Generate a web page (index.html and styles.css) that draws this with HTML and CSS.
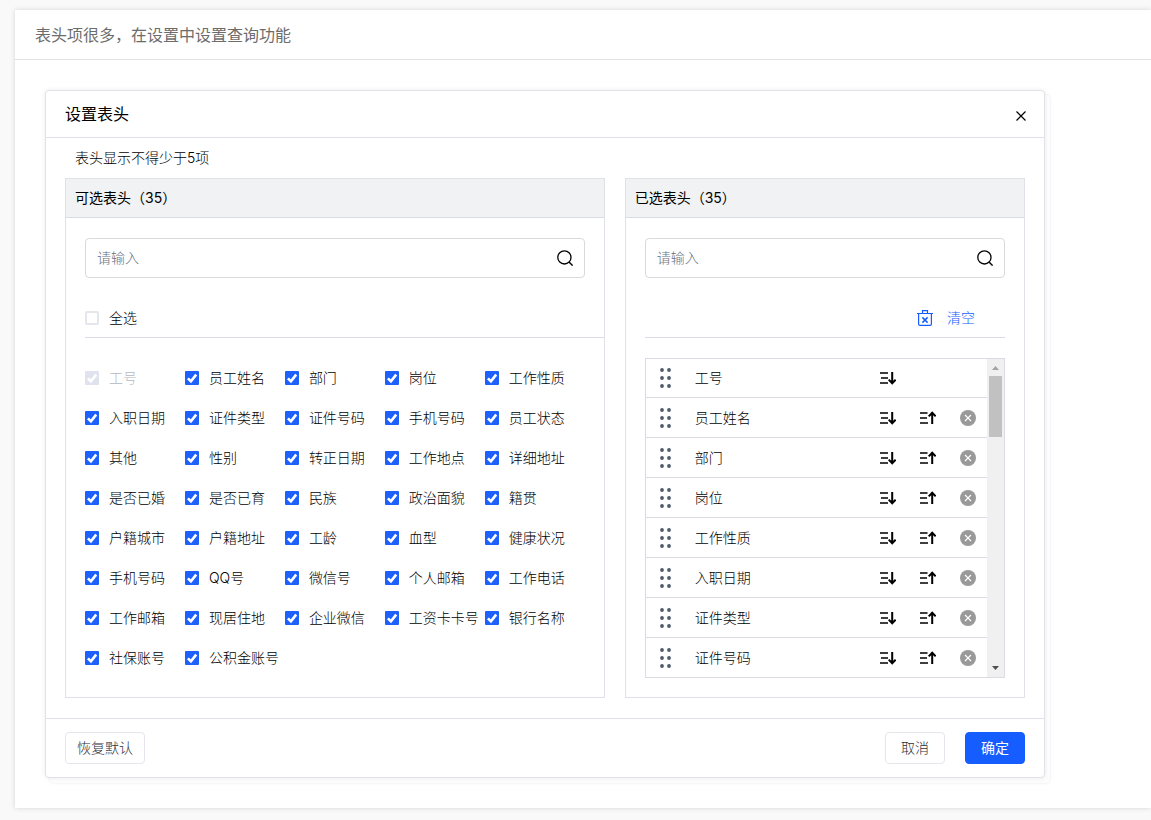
FILE: index.html
```html
<!DOCTYPE html>
<html lang="zh-CN">
<head>
<meta charset="utf-8">
<meta name="viewport" content="width=device-width, initial-scale=1">
<title>设置表头</title>
<link rel="stylesheet" href="styles.css">
</head>
<body>
<svg class="sprite" aria-hidden="true">
  <symbol id="search" viewBox="0 0 16 16"><circle cx="7.4" cy="7.4" r="6.6" fill="none" stroke="currentColor" stroke-width="1.3"/><path d="M12 12l3.6 3.6" fill="none" stroke="currentColor" stroke-width="1.4"/></symbol>
  <symbol id="trash" viewBox="0 0 16 16"><path d="M0 3.500h16M5.500 3.400V.7h5v2.700M1.600 3.500v10.500q0 1.300 1.300 1.300h10.200q1.300 0 1.300-1.300V3.500" fill="none" stroke="currentColor" stroke-width="1.200"/><path d="M5.400 7.400l5.200 5.200m0-5.200l-5.200 5.200" fill="none" stroke="currentColor" stroke-width="1.500"/></symbol>
  <symbol id="down" viewBox="0 0 16 16"><path d="M0 3h8M1 8h7M0 13h8" fill="none" stroke="currentColor" stroke-width="1.7"/><path d="M12.200 2v11.400M8.700 9.600l3.500 3.600 3.500-3.600" fill="none" stroke="currentColor" stroke-width="2"/></symbol>
  <symbol id="up" viewBox="0 0 16 16"><path d="M0 3h7.500M0 8h7M0 13h8" fill="none" stroke="currentColor" stroke-width="1.7"/><path d="M12.200 14V2.800M8.700 6.400l3.500-3.600 3.500 3.600" fill="none" stroke="currentColor" stroke-width="2"/></symbol>
  <symbol id="remove" viewBox="0 0 16 16"><circle cx="8" cy="8" r="8" fill="#999"/><path d="M5 5l6 6m0-6l-6 6" fill="none" stroke="#fff" stroke-width="1.1"/></symbol>
  <symbol id="grip" viewBox="0 0 12 20"><g fill="#4e5969"><circle cx="2" cy="2" r="1.900"/><circle cx="9" cy="2" r="1.900"/><circle cx="2" cy="10" r="1.900"/><circle cx="9" cy="10" r="1.900"/><circle cx="2" cy="18" r="1.900"/><circle cx="9" cy="18" r="1.900"/></g></symbol>
  <symbol id="close" viewBox="0 0 10 10"><path d="M.5.5l9 9m0-9l-9 9" fill="none" stroke="currentColor" stroke-width="1.2"/></symbol>
</svg>

<main class="card">
  <h1 class="card-title">表头项很多，在设置中设置查询功能</h1>
  <div class="card-body">
    <section class="dialog" role="dialog" aria-labelledby="dialog-title">
      <header class="dialog-head">
        <h2 id="dialog-title">设置表头</h2>
        <button class="icon-btn btn-close" type="button" aria-label="关闭"><svg class="icon-close"><use href="#close"/></svg></button>
      </header>
      <div class="dialog-body">
        <p class="hint">表头显示不得少于5项</p>
        <div class="panels">
          <section class="panel panel-available">
            <h3 class="panel-head">可选表头（35）</h3>
            <div class="panel-body">
              <div class="search"><input type="text" placeholder="请输入" aria-label="搜索可选表头"><button class="icon-btn" type="button" aria-label="搜索"><svg class="icon"><use href="#search"/></svg></button></div>
              <div class="toolbar toolbar-all"><label class="check"><input type="checkbox">全选</label></div>
              <div class="options">
                <label class="check"><input type="checkbox" checked disabled><span>工号</span></label>
                <label class="check"><input type="checkbox" checked>员工姓名</label>
                <label class="check"><input type="checkbox" checked>部门</label>
                <label class="check"><input type="checkbox" checked>岗位</label>
                <label class="check"><input type="checkbox" checked>工作性质</label>
                <label class="check"><input type="checkbox" checked>入职日期</label>
                <label class="check"><input type="checkbox" checked>证件类型</label>
                <label class="check"><input type="checkbox" checked>证件号码</label>
                <label class="check"><input type="checkbox" checked>手机号码</label>
                <label class="check"><input type="checkbox" checked>员工状态</label>
                <label class="check"><input type="checkbox" checked>其他</label>
                <label class="check"><input type="checkbox" checked>性别</label>
                <label class="check"><input type="checkbox" checked>转正日期</label>
                <label class="check"><input type="checkbox" checked>工作地点</label>
                <label class="check"><input type="checkbox" checked>详细地址</label>
                <label class="check"><input type="checkbox" checked>是否已婚</label>
                <label class="check"><input type="checkbox" checked>是否已育</label>
                <label class="check"><input type="checkbox" checked>民族</label>
                <label class="check"><input type="checkbox" checked>政治面貌</label>
                <label class="check"><input type="checkbox" checked>籍贯</label>
                <label class="check"><input type="checkbox" checked>户籍城市</label>
                <label class="check"><input type="checkbox" checked>户籍地址</label>
                <label class="check"><input type="checkbox" checked>工龄</label>
                <label class="check"><input type="checkbox" checked>血型</label>
                <label class="check"><input type="checkbox" checked>健康状况</label>
                <label class="check"><input type="checkbox" checked>手机号码</label>
                <label class="check"><input type="checkbox" checked>QQ号</label>
                <label class="check"><input type="checkbox" checked>微信号</label>
                <label class="check"><input type="checkbox" checked>个人邮箱</label>
                <label class="check"><input type="checkbox" checked>工作电话</label>
                <label class="check"><input type="checkbox" checked>工作邮箱</label>
                <label class="check"><input type="checkbox" checked>现居住地</label>
                <label class="check"><input type="checkbox" checked>企业微信</label>
                <label class="check"><input type="checkbox" checked>工资卡卡号</label>
                <label class="check"><input type="checkbox" checked>银行名称</label>
                <label class="check"><input type="checkbox" checked>社保账号</label>
                <label class="check"><input type="checkbox" checked>公积金账号</label>
              </div>
            </div>
          </section>

          <section class="panel panel-chosen">
            <h3 class="panel-head">已选表头（35）</h3>
            <div class="panel-body">
              <div class="search"><input type="text" placeholder="请输入" aria-label="搜索已选表头"><button class="icon-btn" type="button" aria-label="搜索"><svg class="icon"><use href="#search"/></svg></button></div>
              <div class="toolbar toolbar-clear"><button class="clear" type="button"><svg class="icon"><use href="#trash"/></svg>清空</button></div>
              <div class="list">
                <ul class="rows">
                  <li><svg class="grip"><use href="#grip"/></svg><span class="name">工号</span><span class="actions"><button class="icon-btn" type="button" aria-label="下移"><svg class="icon"><use href="#down"/></svg></button></span></li>
                  <li><svg class="grip"><use href="#grip"/></svg><span class="name">员工姓名</span><span class="actions"><button class="icon-btn" type="button" aria-label="下移"><svg class="icon"><use href="#down"/></svg></button><button class="icon-btn" type="button" aria-label="上移"><svg class="icon"><use href="#up"/></svg></button><button class="icon-btn" type="button" aria-label="移除"><svg class="icon"><use href="#remove"/></svg></button></span></li>
                  <li><svg class="grip"><use href="#grip"/></svg><span class="name">部门</span><span class="actions"><button class="icon-btn" type="button" aria-label="下移"><svg class="icon"><use href="#down"/></svg></button><button class="icon-btn" type="button" aria-label="上移"><svg class="icon"><use href="#up"/></svg></button><button class="icon-btn" type="button" aria-label="移除"><svg class="icon"><use href="#remove"/></svg></button></span></li>
                  <li><svg class="grip"><use href="#grip"/></svg><span class="name">岗位</span><span class="actions"><button class="icon-btn" type="button" aria-label="下移"><svg class="icon"><use href="#down"/></svg></button><button class="icon-btn" type="button" aria-label="上移"><svg class="icon"><use href="#up"/></svg></button><button class="icon-btn" type="button" aria-label="移除"><svg class="icon"><use href="#remove"/></svg></button></span></li>
                  <li><svg class="grip"><use href="#grip"/></svg><span class="name">工作性质</span><span class="actions"><button class="icon-btn" type="button" aria-label="下移"><svg class="icon"><use href="#down"/></svg></button><button class="icon-btn" type="button" aria-label="上移"><svg class="icon"><use href="#up"/></svg></button><button class="icon-btn" type="button" aria-label="移除"><svg class="icon"><use href="#remove"/></svg></button></span></li>
                  <li><svg class="grip"><use href="#grip"/></svg><span class="name">入职日期</span><span class="actions"><button class="icon-btn" type="button" aria-label="下移"><svg class="icon"><use href="#down"/></svg></button><button class="icon-btn" type="button" aria-label="上移"><svg class="icon"><use href="#up"/></svg></button><button class="icon-btn" type="button" aria-label="移除"><svg class="icon"><use href="#remove"/></svg></button></span></li>
                  <li><svg class="grip"><use href="#grip"/></svg><span class="name">证件类型</span><span class="actions"><button class="icon-btn" type="button" aria-label="下移"><svg class="icon"><use href="#down"/></svg></button><button class="icon-btn" type="button" aria-label="上移"><svg class="icon"><use href="#up"/></svg></button><button class="icon-btn" type="button" aria-label="移除"><svg class="icon"><use href="#remove"/></svg></button></span></li>
                  <li><svg class="grip"><use href="#grip"/></svg><span class="name">证件号码</span><span class="actions"><button class="icon-btn" type="button" aria-label="下移"><svg class="icon"><use href="#down"/></svg></button><button class="icon-btn" type="button" aria-label="上移"><svg class="icon"><use href="#up"/></svg></button><button class="icon-btn" type="button" aria-label="移除"><svg class="icon"><use href="#remove"/></svg></button></span></li>
                </ul>
                <div class="scrollbar" aria-hidden="true">
                  <svg class="arrow" viewBox="0 0 17 17"><path d="M5 11h7L8.500 7z" fill="#a3a3a3"/></svg>
                  <div class="track"><div class="thumb"></div></div>
                  <svg class="arrow" viewBox="0 0 17 17"><path d="M5 6h7L8.500 10z" fill="#505050"/></svg>
                </div>
              </div>
            </div>
          </section>
        </div>
      </div>
      <footer class="dialog-foot">
        <button class="btn btn-reset" type="button">恢复默认</button>
        <button class="btn" type="button">取消</button>
        <button class="btn btn-primary" type="button">确定</button>
      </footer>
    </section>
  </div>
</main>
</body>
</html>
```
FILE: styles.css
```css
* {
  box-sizing: border-box;
}

body {
  margin: 0;
  padding: 10px 0 12px 15px;
  background: #f9f9f9;
  color: #000;
  font: 300 14px/20px Inter, "Noto Sans CJK SC", sans-serif;
}

h1, h2, h3, p, ul {
  margin: 0;
  padding: 0;
}

button, input {
  font: inherit;
  color: inherit;
}

.sprite {
  position: absolute;
  width: 0;
  height: 0;
}

.icon {
  display: block;
  width: 16px;
  height: 16px;
}

.icon-btn {
  display: block;
  flex: none;
  padding: 0;
  border: 0;
  background: none;
  color: #000;
}

.card {
  background: #fff;
  box-shadow: 0 0 5px rgba(0, 0, 0, 0.15);
}

.card-title {
  padding: 13px 20px 12px;
  border-bottom: 1px solid #e2e2e5;
  color: #6c6c6c;
  font-size: 16px;
  font-weight: 400;
  line-height: 24px;
}

.card-body {
  padding: 30px;
}

.dialog {
  max-width: 1000px;
  border: 1px solid #e1e2e8;
  border-radius: 4px;
  background: #fff;
  box-shadow: 0 0 5px rgba(0, 0, 0, 0.08), 5px 5px 0 #fdfdfd, 5px 5px 3px rgba(0, 0, 0, 0.1);
}

.dialog-head {
  display: flex;
  align-items: center;
  justify-content: space-between;
  height: 47px;
  padding: 0 18px 0 19px;
  border-bottom: 1px solid #e1e2e8;
}

.dialog-head h2 {
  font-size: 16px;
  font-weight: 400;
  line-height: 24px;
}

.btn-close {
  padding-top: 4px;
}

.icon-close {
  display: block;
  width: 10px;
  height: 10px;
}

.dialog-body {
  padding: 0 19px 20px;
}

.hint {
  padding: 10px;
}

.panels {
  display: flex;
  gap: 20px;
}

.panel {
  min-width: 0;
  border: 1px solid #e1e2e8;
}

.panel-available {
  flex: 27 1 0;
}

.panel-chosen {
  flex: 20 1 0;
}

.panel-head {
  padding: 9px;
  border-bottom: 1px solid #d9dce3;
  background: #f1f2f4;
  font-size: 14px;
  font-weight: 400;
}

.panel-body {
  padding: 20px 19px 19px;
}

.search {
  display: flex;
  align-items: center;
  height: 40px;
  padding: 0 11px;
  border: 1px solid #d9d9d9;
  border-radius: 4px;
}

.search input {
  flex: 1;
  min-width: 0;
  padding: 0;
  border: 0;
  outline: 0;
  background: none;
}

.search input::placeholder {
  color: #667080;
  opacity: 1;
}

.toolbar {
  display: flex;
  align-items: center;
  height: 40px;
  margin-top: 20px;
  border-bottom: 1px solid #dadbe4;
}

.toolbar-all {
  margin-right: -19px;
}

.toolbar-clear {
  justify-content: flex-end;
  padding-right: 30px;
}

.clear {
  display: flex;
  align-items: center;
  gap: 14px;
  padding: 0;
  border: 0;
  background: none;
  color: #165dff;
}

.options {
  display: grid;
  grid-template-columns: repeat(5, 1fr);
  grid-auto-rows: 40px;
  margin-top: 20px;
}

.check {
  display: flex;
  align-items: center;
  gap: 10px;
  min-width: 0;
  white-space: nowrap;
}

.check input {
  flex: none;
  appearance: none;
  width: 14px;
  height: 14px;
  margin: 0;
  border: 2px solid #e5e6eb;
  border-radius: 2px;
  background: #fff;
}

.check input:checked {
  border: 0;
  border-radius: 1px;
  background: #1e60fb url("data:image/svg+xml,%3Csvg xmlns='http://www.w3.org/2000/svg' viewBox='0 0 14 14'%3E%3Cpath d='M2.900 7.300l3 3L11.200 3.600' fill='none' stroke='%23fff' stroke-width='2.600'/%3E%3C/svg%3E");
}

.check input:disabled {
  background-color: #e0e3ee;
}

.check input:disabled + span {
  color: #b4b7be;
}

.list {
  display: flex;
  margin-top: 20px;
  border: 1px solid #dadbe4;
  border-top: 0;
  border-bottom: 0;
}

.rows {
  flex: 1;
  list-style: none;
}

.rows li {
  display: flex;
  align-items: center;
  height: 40px;
  padding: 0 11px 0 14px;
  border-bottom: 1px solid #dadbe4;
}

.rows li:first-child {
  border-top: 1px solid #dadbe4;
}

.grip {
  width: 12px;
  height: 20px;
}

.name {
  flex: 1;
  padding-left: 23px;
}

.actions {
  display: flex;
  gap: 24px;
  width: 96px;
}

.scrollbar {
  display: flex;
  flex-direction: column;
  width: 17px;
  border-top: 1px solid #dadbe4;
  border-bottom: 1px solid #dadbe4;
  background: #f0f0f0;
}

.arrow {
  width: 17px;
  height: 17px;
}

.track {
  flex: 1;
  padding: 0 2px;
}

.thumb {
  height: 61px;
  background: #c1c1c1;
}

.dialog-foot {
  display: flex;
  gap: 20px;
  padding: 13px 19px;
  border-top: 1px solid #e1e2e8;
}

.btn {
  height: 32px;
  padding: 0 15px;
  border: 1px solid #e5e6eb;
  border-radius: 4px;
  background: #fff;
  color: #2c3038;
}

.btn-reset {
  margin-right: auto;
  padding: 0 11px;
}

.btn-primary {
  border-color: #165dff;
  background: #165dff;
  color: #fff;
  font-weight: 400;
}
```
